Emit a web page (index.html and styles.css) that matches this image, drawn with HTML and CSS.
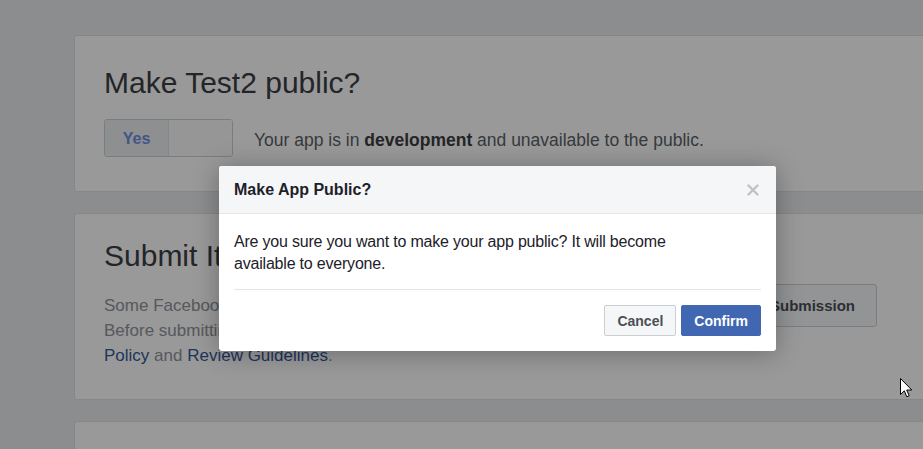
FILE: index.html
```html
<!DOCTYPE html>
<html>
<head>
<meta charset="utf-8">
<link rel="stylesheet" href="styles.css">
</head>
<body>
<div class="page">
  <section class="card card-public">
    <h1 class="card-title">Make Test2 public?</h1>
    <div class="public-row">
      <div class="toggle">
        <span class="toggle-yes">Yes</span>
        <span class="toggle-no"></span>
      </div>
      <p class="status">Your app is in <b>development</b> and unavailable to the public.</p>
    </div>
  </section>
  <section class="card card-submit">
    <h1 class="card-title">Submit Items for Approval</h1>
    <div class="submit-row">
      <p class="submit-text">Some Facebook integrations require approval before public usage.<br>Before submitting your app for review, please consult our Platform<br><a href="#">Policy</a> and <a href="#">Review Guidelines</a>.</p>
      <button class="btn-submission">Start a Submission</button>
    </div>
  </section>
  <section class="card card-empty"></section>
</div>

<div class="overlay"></div>

<div class="dialog">
  <div class="dialog-header">
    <span class="dialog-title">Make App Public?</span>
    <svg class="dialog-close" width="12" height="12" viewBox="0 0 12 12"><path d="M1.5 1.5 L10.5 10.5 M10.5 1.5 L1.5 10.5" stroke="#bec2c9" stroke-width="2.4" stroke-linecap="round"/></svg>
  </div>
  <div class="dialog-body">
    <div class="dialog-content">
      <p class="dialog-text">Are you sure you want to make your app public? It will become available to everyone.</p>
    </div>
    <div class="dialog-footer">
      <button class="btn btn-cancel">Cancel</button>
      <button class="btn btn-confirm">Confirm</button>
    </div>
  </div>
</div>

<svg class="cursor" width="13" height="21" viewBox="0 0 13 21">
  <path d="M0.5 0.5 L0.5 16.5 L4.3 12.8 L6.8 18.8 L9.2 17.8 L6.7 12 L11.8 12 Z" fill="#fff" stroke="#000" stroke-width="1" stroke-linejoin="miter"/>
</svg>
</body>
</html>
```
FILE: styles.css
```css
html, body {
  margin: 0;
  padding: 0;
}
body {
  background: #e9ebee;
  font-family: "Liberation Sans", Arial, sans-serif;
  width: 923px;
  height: 449px;
  overflow: hidden;
  position: relative;
}
.page {
  padding: 35px 0 0 74px;
  display: flex;
  flex-direction: column;
  gap: 21px;
}
.card {
  background: #fff;
  border: 1px solid #dddfe2;
  border-radius: 3px;
  width: 900px;
  box-sizing: border-box;
  padding: 0 30px 0 29px;
}
.card-title {
  margin: 0;
  font-size: 30px;
  line-height: 36px;
  font-weight: normal;
  color: #3b3e44;
}
.card-public {
  padding-top: 29px;
  padding-bottom: 34px;
}
.public-row {
  display: flex;
  align-items: center;
  margin-top: 18px;
  gap: 21px;
}
.toggle {
  display: flex;
  width: 129px;
  height: 38px;
  box-sizing: border-box;
  border: 1px solid #ccd0d5;
  border-radius: 3px;
  overflow: hidden;
}
.toggle-yes {
  width: 64px;
  background: #eceef1;
  border-right: 1px solid #dddfe2;
  color: #6f90e0;
  font-weight: bold;
  font-size: 16px;
  display: flex;
  align-items: center;
  justify-content: center;
  padding-top: 2px;
  box-sizing: border-box;
}
.toggle-no {
  flex: 1;
  background: #fbfbfb;
}
.status {
  margin: 0;
  padding-top: 4px;
  font-size: 17.5px;
  color: #5a5f66;
}
.status b {
  color: #3b3e44;
}
.card-submit {
  padding-top: 24px;
  padding-bottom: 31px;
}
.submit-row {
  display: flex;
  align-items: flex-start;
  margin-top: 9px;
}
.submit-text {
  margin: 10px 0 0;
  font-size: 17px;
  line-height: 25px;
  color: #90949c;
  width: 590px;
}
.submit-text a {
  color: #365899;
  text-decoration: none;
}
.btn-submission {
  margin-left: auto;
  margin-right: 66px;
  margin-top: 1px;
  height: 43px;
  padding: 0 21px;
  font-family: inherit;
  font-size: 15px;
  font-weight: bold;
  color: #4b4f56;
  background: #f6f7f9;
  border: 1px solid #ccd0d5;
  border-radius: 3px;
}
.card-empty {
  height: 200px;
}
.overlay {
  position: absolute;
  inset: 0;
  background: rgba(0, 0, 0, 0.4);
}
.dialog {
  position: absolute;
  left: 219px;
  top: 166px;
  width: 557px;
  background: #fff;
  border-radius: 3px;
  box-shadow: 0 2px 26px rgba(0, 0, 0, 0.3);
  overflow: hidden;
}
.dialog-header {
  height: 48px;
  box-sizing: border-box;
  background: #f5f6f7;
  border-bottom: 1px solid #e5e5e5;
  display: flex;
  align-items: center;
  justify-content: space-between;
  padding: 0 17px 0 15px;
}
.dialog-title {
  font-size: 16px;
  font-weight: bold;
  color: #1d2129;
}
.dialog-body {
  padding: 0 15px;
}
.dialog-content {
  padding: 17px 0 14px;
  border-bottom: 1px solid #e5e5e5;
}
.dialog-text {
  margin: 0;
  max-width: 460px;
  font-size: 16px;
  line-height: 22px;
  letter-spacing: -0.2px;
  color: #1d2129;
}
.dialog-footer {
  display: flex;
  justify-content: flex-end;
  gap: 5px;
  padding: 15px 0 15px;
}
.btn {
  height: 31px;
  box-sizing: border-box;
  padding: 0 11px;
  font-family: inherit;
  font-size: 14px;
  font-weight: bold;
  border-radius: 2px;
}
.btn-cancel {
  background: #f5f6f7;
  border: 1px solid #ccd0d5;
  color: #4b4f56;
  padding: 0 12px;
}
.btn-confirm {
  background: #4267b2;
  border: 1px solid #4267b2;
  color: #fff;
  padding: 0 12px;
}
.cursor {
  position: absolute;
  left: 900px;
  top: 378px;
}
```
